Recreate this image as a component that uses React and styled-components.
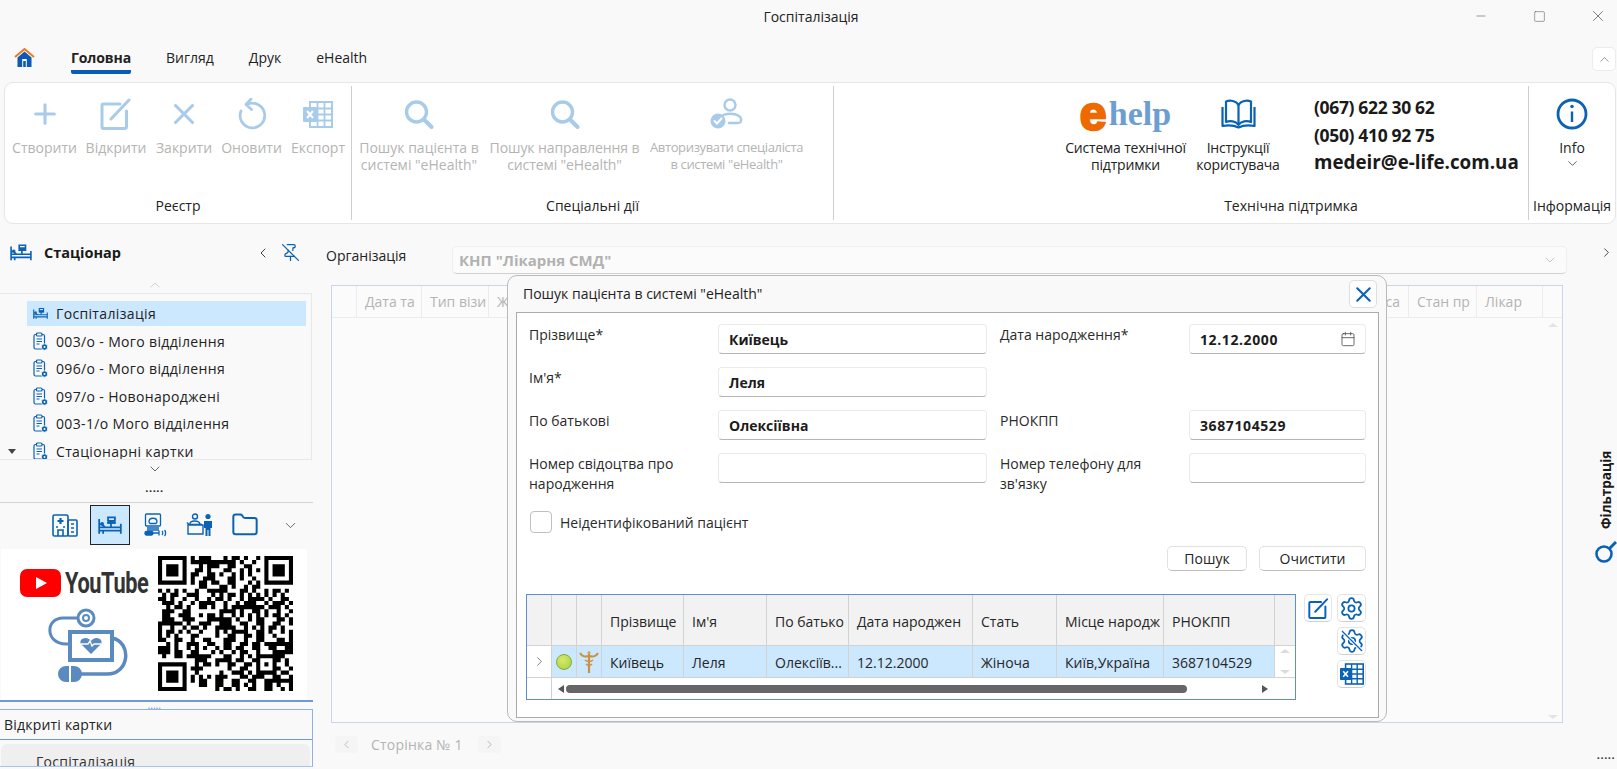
import React from 'react';
import styled, { createGlobalStyle } from 'styled-components';
import { Settings, Folder, ChevronUp, ChevronDown, ChevronLeft, ChevronRight, Minus, Square, X, Plus, PinOff, Calendar } from 'lucide-react';

const BLUE = '#0a62b6';
const PALE = '#a9cbea';
const FONT = '"Open Sans", "Noto Sans", "Liberation Sans", sans-serif';

const Global = createGlobalStyle`
  html, body { margin: 0; padding: 0; background: #f9f9f9; }
  body { font-family: ${FONT}; font-size: 14px; color: #1f1f1f; overflow: hidden; }
  * { box-sizing: border-box; }
`;

const Page = styled.div`position: relative; width: 1617px; height: 769px; display: flex; flex-direction: column; overflow: hidden; background: #f9f9f9;`;

/* Title bar */
const TitleBar = styled.div`height: 32px; flex: none; display: grid; grid-template-columns: 1fr auto 1fr; align-items: center; padding-left: 5px;`;
const TitleText = styled.div`grid-column: 2; font-size: 14px; color: #222;`;
const WinControls = styled.div`grid-column: 3; justify-self: end; display: flex; gap: 28.5px; padding-right: 4px; color: #555;`;
const WinBtn = styled.div`width: 30px; display: flex; justify-content: center; align-items: center;`;

/* Tabs */
const TabBar = styled.div`height: 50px; flex: none; display: flex; align-items: flex-start; padding: 15px 1px 0 14px;`;
const HomeSlot = styled.div`width: 21px; height: 20px; margin: 1px 36px 0 0;`;
const Tabs = styled.div`display: flex; gap: 35px; margin-top: 1px;`;
const Tab = styled.div`
  line-height: 20px; padding-bottom: 2px; font-size: 14px; color: #222;
  font-weight: ${p => (p.$active ? 700 : 400)};
  letter-spacing: ${p => (p.$active ? -0.1 : 0)}px;
  border-bottom: 4px solid ${p => (p.$active ? '#0a5bb5' : 'transparent')};
  border-radius: 2px;
`;
const CollapseBtn = styled.div`margin-left: auto; width: 24px; height: 24px; background: #fff; border: 1px solid #ececec; border-radius: 5px; display: flex; align-items: center; justify-content: center; color: #777;`;

/* Ribbon */
const Ribbon = styled.div`height: 142px; flex: none; margin: 0 1px 0 4px; background: #fff; border: 1px solid #e6e6e6; border-radius: 9px; display: flex; align-items: stretch; padding: 3px 0;`;
const Group = styled.div`
  width: ${p => p.$w}px; flex: none; display: flex; flex-direction: column;
  border-right: ${p => (p.$last ? 'none' : '1px solid #cfcfcf')};
`;
const GroupBody = styled.div`flex: 1; display: flex; justify-content: ${p => p.$end ? 'flex-end' : 'flex-start'}; gap: ${p => p.$gap || 10}px; padding: 0 ${p => p.$pr || 0}px 0 ${p => p.$pl || 0}px;`;
const GroupLabel = styled.div`height: 18px; margin-bottom: 5px; padding-left: ${p => p.$pl || 0}px; line-height: 18px; font-size: 14px; text-align: center; color: #222; white-space: nowrap;`;
const Tool = styled.div`width: ${p => p.$w}px; flex: none; display: flex; flex-direction: column; align-items: center; padding-top: 11px;`;
const ToolIcon = styled.div`height: 34px; display: flex; align-items: center; justify-content: center;`;
const ToolLabel = styled.div`margin-top: 8px; line-height: 17px; font-size: ${p => p.$fs || 14}px; letter-spacing: ${p => p.$ls ?? 0}px; text-align: center; white-space: pre; color: ${p => (p.$on ? '#222' : '#b4b4b4')};`;
const Contact = styled.div`width: 207px; flex: none; margin-left: 26px; padding-top: 8px; font-weight: 700; line-height: 27.5px; color: #1a1a1a; white-space: nowrap;`;
const Phone = styled.div`font-size: 17.5px; letter-spacing: -0.35px;`;
const Email = styled.div`font-size: 18.800px;`;
const LogoBox = styled.div`height: 36px; display: flex; align-items: flex-end; margin-top: -1px;`;
const LogoE = styled.span`font: 700 48px/36px "Liberation Sans", sans-serif; color: #ee6a00; -webkit-text-stroke: 2.5px #ee6a00; width: 29px; height: 36px; display: block; margin-top: -8px;`;
const LogoHelp = styled.span`font: 700 34px/36px "Liberation Serif", serif; color: #6c9ed2; letter-spacing: 0;`;

/* Body */
const Body = styled.div`flex: 1; min-height: 0; display: flex;`;

/* Sidebar */
const Sidebar = styled.div`width: 314px; flex: none; display: flex; flex-direction: column; overflow: hidden;`;
const SideHeader = styled.div`height: 52px; flex: none; display: flex; align-items: center; padding: 5px 14px 0 10px;`;
const SideTitle = styled.div`margin-left: 12px; font-weight: 700; font-size: 14.500px; flex: 1; color: #1a1a1a;`;
const PinSlot = styled.div`margin-left: 10px; color: ${BLUE}; display: flex;`;
const ArrowRow = styled.div`height: ${p => p.$h}px; flex: none; display: flex; justify-content: center; align-items: center; padding-right: 5px; color: ${p => p.$c || '#555'};`;
const TreeBox = styled.div`height: 167px; flex: none; width: 312px; border: 1px solid #e8e8e8; border-left: none; padding: 7px 5px 0 0; overflow: hidden;`;
const TreeLine = styled.div`display: flex; align-items: center; height: 25px; margin-bottom: 2.5px;`;
const ToggleSlot = styled.div`width: 27px; flex: none; padding-left: 8px;`;
const Triangle = styled.div`width: 0; height: 0; border-left: 4.5px solid transparent; border-right: 4.5px solid transparent; border-top: 5px solid #444;`;
const TreeRow = styled.div`flex: 1; height: 25px; display: flex; align-items: center; gap: 8px; padding-left: 6px; font-size: 14px; letter-spacing: 0.35px; color: #222; white-space: nowrap; background: ${p => (p.$sel ? '#cce8ff' : 'transparent')};`;
const Dots = styled.div`height: ${p => p.$h}px; flex: none; display: flex; justify-content: center; align-items: center; padding-right: ${p => p.$pr ?? 0}px; padding-bottom: ${p => p.$pb ?? 0}px; font-size: ${p => p.$fs || 11}px; line-height: 1; font-weight: 700; letter-spacing: ${p => p.$ls ?? 0.6}px; color: ${p => p.$c || '#222'};`;
const IconStrip = styled.div`height: 47px; flex: none; width: 313px; border-top: 1px solid #d4d4d4; display: flex; align-items: center; gap: 5px; padding: 0 0 2px 45px;`;
const StripCell = styled.div`width: 40px; height: 40px; display: flex; align-items: center; justify-content: center; color: ${BLUE}; border: 1px solid ${p => (p.$sel ? '#222' : 'transparent')}; background: ${p => (p.$sel ? '#cce8ff' : 'transparent')};`;
const Banner = styled.div`height: 151px; width: 306px; margin-left: 1px; flex: none; background: #fff; display: flex; padding: 7px 14px 0 0;`;
const BannerLeft = styled.div`flex: 1; display: flex; flex-direction: column; align-items: flex-start; padding: 13px 0 0 19px;`;
const YT = styled.div`display: flex; align-items: center; gap: 4px;`;
const YTText = styled.span`font: 700 29px/28px Roboto, sans-serif; color: #333; display: inline-block; transform: scaleX(0.75); transform-origin: left center; letter-spacing: -0.5px; width: 83px;`;
const MedicalSlot = styled.div`margin: 11px 0 0 28px;`;
const BlueRule = styled.div`height: 2px; width: 313px; flex: none; background: #6f9bd3;`;
const OpenPanel = styled.div`height: 58px; width: 313px; flex: none; border: 1px solid #8fb3e0; border-left: none; border-bottom-color: #a9c4e6; overflow: hidden;`;
const OpenHeader = styled.div`height: 30px; padding-left: 4px; line-height: 29px; font-size: 14px; letter-spacing: 0.2px; border-bottom: 1px solid #6f9bd3; color: #222;`;
const OpenRow = styled.div`height: 30px; margin: 4px 2px 0 1px; border-radius: 6px; background: #efefef; padding: 8px 0 0 35px; font-size: 14px; line-height: 20px; letter-spacing: 0.3px; color: #333;`;

/* Main */
const Main = styled.div`flex: 1; min-width: 0; display: flex; flex-direction: column; padding: 22px 23px 0 12px;`;
const OrgRow = styled.div`height: 28px; flex: none; display: flex; align-items: flex-start;`;
const OrgLabel = styled.div`width: 126px; flex: none; font-size: 14px; line-height: 19px; color: #222;`;
const OrgSelect = styled.div`flex: 1; height: 28px; background: #fbfbfb; border: 1px solid #efefef; border-bottom: 1px solid #cfcfcf; border-radius: 5px; display: flex; align-items: center; justify-content: space-between; padding: 0 8px 0 6px; font-weight: 700; font-size: 15px; color: #b2b2b2;`;
const Grid = styled.div`margin: 11px 4px 0 5px; height: 438px; flex: none; border: 1px solid #c8d8ec; display: flex; flex-direction: column; background: #fbfbfb;`;
const GridHead = styled.div`height: 32px; flex: none; display: flex; border-bottom: 1px solid #ececec; color: #b4b4b4; font-size: 14px;`;
const GridCol = styled.div`
  width: ${p => (p.$w ? p.$w + 'px' : 'auto')}; flex: ${p => (p.$w ? 'none' : 1)};
  border-right: ${p => (p.$last ? 'none' : '1px solid #ececec')};
  padding: 0 ${p => (p.$right ? 8 : 0)}px 0 ${p => (p.$right ? 0 : 8)}px; line-height: 31px; white-space: nowrap; overflow: hidden;
  text-align: ${p => (p.$right ? 'right' : 'left')};
`;
const GridBody = styled.div`flex: 1; display: flex; flex-direction: column; justify-content: space-between; align-items: flex-end; padding: 5px 4px 3px 0;`;
const Tri = styled.div`width: 0; height: 0; border-left: ${p => p.$s}px solid transparent; border-right: ${p => p.$s}px solid transparent; ${p => (p.$down ? 'border-top' : 'border-bottom')}: ${p => p.$s - 1}px solid ${p => p.$c};`;
const Pager = styled.div`margin: 13px 0 0 9px; height: 17px; flex: none; display: flex; align-items: center; font-size: 14px; letter-spacing: 0.2px; color: #b4b4b4;`;
const PagerBtn = styled.div`width: 23px; height: 17px; background: #f5f5f5; border-radius: 4px; display: flex; align-items: center; justify-content: center; color: #999;`;
const PagerText = styled.div`width: 120px; padding-left: 13px; white-space: nowrap;`;

/* Rail */
const Rail = styled.div`width: 27px; flex: none; display: flex; flex-direction: column; align-items: center; padding: 21px 0 9px 5px; color: #333;`;
const RailText = styled.div`writing-mode: vertical-rl; transform: rotate(180deg); margin-top: 189px; font-weight: 700; font-size: 13.500px; line-height: 14px; color: #1a1a1a; height: 80px; white-space: nowrap; text-align: left;`;
const RailIcon = styled.div`margin-top: 12px; display: flex; overflow: hidden;`;
const RailDots = styled.div`margin-top: auto; font-size: 11px; font-weight: 700; line-height: 1; letter-spacing: 0.6px; color: #333;`;

/* Dialog */
const Dialog = styled.div`position: absolute; left: 507px; top: 275px; width: 880px; height: 447px; background: #f9f9f9; border: 1.5px solid #b9b9b9; border-radius: 10px; display: flex; flex-direction: column; padding: 0 7px 3px 8px;`;
const DialogHead = styled.div`height: 36px; flex: none; display: flex; align-items: flex-start; justify-content: space-between; padding: 8px 0 0 7px; font-size: 14px; color: #222;`;
const CloseBtn = styled.div`width: 28px; height: 28px; margin: -4px 2px 0 0; background: #fff; border: 1px solid #dedede; border-radius: 5px; display: flex; align-items: center; justify-content: center; color: ${BLUE};`;
const DialogPanel = styled.div`flex: 1; min-height: 0; background: #fff; border: 1px solid #ababab; padding-top: 11px;`;
const Form = styled.div`display: grid; grid-template-columns: 189px 269px 202px 177px; grid-auto-rows: 30px; row-gap: 13px; padding-left: 12px;`;
const FormLabel = styled.div`padding: 1px 0 0 ${p => (p.$second ? 13 : 0)}px; font-size: 14px; line-height: 20px; color: #2a2a2a; ${p => p.$tall ? 'height: 41px;' : ''}`;
const Field = styled.div`height: 30px; display: flex; align-items: center; justify-content: space-between; padding: 0 9px 0 10px; background: #fff; border: 1px solid #ebebeb; border-bottom: 1px solid #b5b5b5; border-radius: 4px; font-weight: 700; font-size: 14px; letter-spacing: ${p => (p.$num ? 0.6 : 0)}px; color: #1c1c1c;`;
const CheckRow = styled.label`display: flex; align-items: center; gap: 8px; height: 22px; margin: 28px 0 0 13px; font-size: 14px; color: #2a2a2a;`;
const CheckBox = styled.span`width: 22px; height: 22px; border: 1px solid #c0c0c0; border-radius: 4px; background: #fff;`;
const FormActions = styled.div`display: flex; justify-content: flex-end; gap: 12px; margin-top: 13px; padding-right: 12px;`;
const PlainBtn = styled.div`width: ${p => p.$w}px; height: 25px; border: 1px solid #e2e2e2; border-bottom: 1px solid #bdbdbd; border-radius: 5px; background: #fff; font-size: 14px; text-align: center; line-height: 24px; color: #222;`;
const ResultRow = styled.div`display: flex; align-items: flex-start; gap: 8px; margin-top: 23px; padding-left: 9px;`;
const Table = styled.div`width: 770px; height: 106px; flex: none; border: 1px solid #5b8fd0; display: flex; flex-direction: column;`;
const THead = styled.div`height: 51px; flex: none; display: flex; background: #f2f2f2; border-bottom: 1px solid #d2d2d2;`;
const TRow = styled.div`height: 32px; flex: none; display: flex; border-bottom: 1px solid #d2d2d2;`;
const Cell = styled.div`
  width: ${p => p.$w}px; flex: none; display: flex; align-items: center; justify-content: ${p => p.$center ? 'center' : 'flex-start'};
  padding-left: ${p => (p.$center ? 0 : 8)}px; padding-top: ${p => (p.$center ? 0 : 2)}px; overflow: hidden; white-space: nowrap; font-size: 14px; color: #262626;
  border-right: 1px solid ${p => (p.$noline ? 'transparent' : '#d2d2d2')};
  background: ${p => (p.$sel ? '#cce8ff' : 'transparent')};
`;
const VScroll = styled.div`flex: 1; display: flex; flex-direction: column; align-items: center; justify-content: space-between; padding: 3px 0; background: #fff;`;
const HScroll = styled.div`flex: 1; display: flex; align-items: center;`;
const HCorner = styled.div`width: 25px; height: 100%; flex: none; border-right: 1px solid #d2d2d2; margin-right: 6px;`;
const HTri = styled.div`width: 0; height: 0; border-top: 4.5px solid transparent; border-bottom: 4.5px solid transparent; ${p => (p.$right ? 'border-left' : 'border-right')}: 6px solid #555;`;
const Thumb = styled.div`width: 621px; height: 8px; background: #666; border-radius: 4px; margin: 0 75px 0 2px;`;
const Green = styled.div`width: 16px; height: 16px; border-radius: 50%; border: 1px solid #8aa83c; background: radial-gradient(circle at 40% 35%, #d4ea6a, #a9cf3e);`;
const SideBtns = styled.div`display: grid; grid-template-columns: 28px 29px; grid-auto-rows: 28px; column-gap: 5px; row-gap: 5px;`;
const SideBtn = styled.div`grid-column: ${p => p.$col}; height: 28px; background: #fff; border: 1px solid #e4e4e4; border-bottom-color: #cfcfcf; border-radius: 5px; display: flex; align-items: center; justify-content: center; color: ${BLUE};`;
const GearWrap = styled.div`position: relative; width: 26px; height: 26px; color: ${BLUE};`;
const Slash = styled.svg`position: absolute; left: 0; top: 0;`;

/* Drawings */
const Home = () => (
  <svg width="21" height="20" viewBox="0 0 21 20">
    <path d="M1 9 10.5 1 20 9" fill="none" stroke="#ee7a1f" strokeWidth="2" />
    <path d="M3.5 9.5 10.5 3.5 17.5 9.5V19H3.5Z" fill="#0a5bb5" />
    <rect x="8.2" y="11" width="4.6" height="8" fill="#fff" />
    <rect x="9.2" y="13" width="2.6" height="6" fill="#0a5bb5" />
  </svg>
);
const Mag = ({ c = PALE }) => (
  <svg width="30" height="29" viewBox="0 0 30 29" fill="none" stroke={c} strokeLinecap="round">
    <circle cx="12.5" cy="12" r="10" strokeWidth="3.4" />
    <line x1="20" y1="19.5" x2="27.5" y2="27" strokeWidth="4" />
  </svg>
);
const Undo = () => (
  <svg width="28" height="33" viewBox="0 0 28 33" fill="none" stroke={PALE} strokeWidth="2.8" strokeLinecap="round" strokeLinejoin="round">
    <path d="M9 6.5a12.3 12.3 0 1 1-6 6.5" />
    <path d="M13 1 8 6.5l5.5 5" />
  </svg>
);
const PenBig = ({ c = PALE, s = 32, sw = 3 }) => (
  <svg width={s} height={s} viewBox="0 0 32 32" fill="none" stroke={c} strokeWidth={sw} strokeLinecap="round" strokeLinejoin="round">
    <path d="M20 6H3.5a1.5 1.5 0 0 0-1.5 1.5v21.500a1.500 1.500 0 0 0 1.500 1.500H25a1.500 1.500 0 0 0 1.500-1.500V13" />
    <path d="M11 21 29 2" />
  </svg>
);
const Excel = ({ c = PALE, w = 30, h = 27 }) => (
  <svg width={w} height={h} viewBox="0 0 30 27" fill="none">
    <rect x="7" y="1" width="22" height="25" stroke={c} strokeWidth="2" fill="#fff" />
    <path d="M14.500 1v25M21.500 1v25M7 7.500h22M7 13.500h22M7 19.500h22" stroke={c} strokeWidth="1.800" />
    <rect x="0" y="6" width="14" height="15" rx="1" fill={c} />
    <path d="M4 10l6 7M10 10l-6 7" stroke="#fff" strokeWidth="2" />
  </svg>
);
const AuthUser = () => (
  <svg width="34" height="32" viewBox="0 0 34 32" fill="none" stroke={PALE} strokeWidth="2.400" strokeLinecap="round">
    <circle cx="20" cy="7" r="5.500" />
    <path d="M12 18c3-3 13-3 17 0 3 2 3 7-1 7H19" />
    <circle cx="8" cy="23" r="7.500" fill={PALE} stroke="none" />
    <path d="M4.500 23l2.500 2.500 4.500-5" stroke="#fff" strokeWidth="2" />
  </svg>
);
const Book = () => (
  <svg width="35" height="30" viewBox="0 0 35 30" fill="none" stroke={BLUE} strokeWidth="2.200" strokeLinejoin="round">
    <path d="M17.500 6C15 1.500 9 1 5 2.500V23c4-1.500 10-1 12.500 3 2.500-4 8.500-4.500 12.500-3V2.500C26 1 20 1.500 17.500 6Z" />
    <path d="M17.500 6v20" />
    <path d="M1.500 8v19c5-1 11-1 16 1.500C22.500 26 28.500 26 33.500 27V8" />
  </svg>
);
const Info = () => (
  <svg width="32" height="32" viewBox="0 0 32 32" fill="none" stroke={BLUE}>
    <circle cx="16" cy="16" r="14" strokeWidth="2.800" />
    <path d="M16 13.500V24" strokeWidth="2.400" />
    <circle cx="16" cy="8.500" r="1.700" fill={BLUE} stroke="none" />
  </svg>
);
const Bed = ({ s = 22 }) => (
  <svg width={s} height={s * 0.82} viewBox="0 0 24 20" fill="none" stroke={BLUE} strokeWidth="1.800">
    <path d="M1 4v15M1 9.500h3l3 3M1 12.500h22v3.500H1M23 9v10M5 16v3" />
    <circle cx="4" cy="9" r="1" fill={BLUE} />
    <path d="M13 12.500V8M10 2.500h7v3.500h-7zM9 8h9" />
    <path d="M11 6h5v2h-5z" fill={BLUE} />
  </svg>
);
const Clip = () => (
  <svg width="15" height="19" viewBox="0 0 15 19" fill="none" stroke={BLUE} strokeWidth="1.200">
    <rect x="1" y="2.500" width="10.500" height="14.500" rx="1.500" />
    <rect x="3.500" y="1" width="5.500" height="3" rx="1" fill="#fff" />
    <path d="M3.500 7h5.500M3.500 9.500h5.500M3.500 12h3" />
    <circle cx="11.500" cy="15" r="3.200" fill={BLUE} stroke="#fff" strokeWidth="0.800" />
    <circle cx="11.500" cy="15" r="1" fill="#fff" stroke="none" />
  </svg>
);
const Hospital = () => (
  <svg width="26" height="23" viewBox="0 0 26 23" fill="none" stroke={BLUE} strokeWidth="1.600">
    <rect x="1" y="1" width="15" height="21" rx="1.500" />
    <rect x="16" y="6" width="9" height="16" rx="1" />
    <path d="M8.500 4v6M5.500 7h6" strokeWidth="2.200" />
    <path d="M6 22v-6h5v6M4 13h2M11 13h2M19 10h3M19 14h3M19 18h3" />
  </svg>
);
const Monitor = () => (
  <svg width="23" height="24" viewBox="0 0 23 24" fill="none" stroke={BLUE} strokeWidth="1.300">
    <rect x="1.500" y="1" width="15" height="12" rx="1" />
    <path d="M5 9c0-5 8-5 8 0l-1 1.500H6zM3 15h12M3 17h12" />
    <rect x="1" y="18.500" width="8" height="3.500" rx="1.500" fill={BLUE} />
    <path d="M9 20h6M15 17.500v5M18 18c1 1 1 3 0 4M20.500 17c1.500 1.500 1.500 4.500 0 6" />
  </svg>
);
const Reception = () => (
  <svg width="28" height="24" viewBox="0 0 28 24" fill="none" stroke={BLUE} strokeWidth="1.400">
    <circle cx="9" cy="3.500" r="2.500" />
    <path d="M4 11c0-4 9-4 10 0M1 9.500l2 2h13M2 12h15v9H2z" />
    <circle cx="22" cy="3.500" r="2.600" fill={BLUE} stroke="none" />
    <path d="M18 8h8v7h-1.500v8h-2v-6h-1v6h-2v-8H18z" fill={BLUE} stroke="none" />
  </svg>
);
const Medical = () => (
  <svg width="80" height="75" viewBox="0 0 80 75" fill="none" stroke="#5b8ac0">
    <circle cx="38" cy="10" r="8" strokeWidth="3" />
    <circle cx="38" cy="10" r="3" strokeWidth="2" />
    <path d="M29 10H15C-3 10-3 36 18 36h4" strokeWidth="3" />
    <rect x="22" y="24" width="42" height="28" strokeWidth="4" />
    <path d="M43 46 33 36c-3-5 6-9 10-3 4-6 13-2 10 3z" fill="#5b8ac0" stroke="none" />
    <path d="M33 36h7l2-3 2 5 2-2h7" stroke="#fff" strokeWidth="1.300" />
    <path d="M64 30c20 4 18 36-5 36H32" strokeWidth="3.500" />
    <path d="M21 58h-3a8 8 0 0 0 0 16h3z M23 58h3a8 8 0 0 1 0 16h-3z" fill="#5b8ac0" stroke="none" />
  </svg>
);
const Caduceus = () => (
  <svg width="20" height="24" viewBox="0 0 20 24" fill="none" stroke="#c9923c" strokeWidth="1.600">
    <path d="M10 3v20" strokeWidth="2.200" />
    <circle cx="10" cy="2.500" r="1.500" fill="#d9a850" stroke="none" />
    <path d="M1 3c2 4 6 4 8 3M19 3c-2 4-6 4-8 3" strokeWidth="2" />
    <path d="M6 10c2 2 6 2 8 0M7 14c2 2 4 2 6 0" />
  </svg>
);
const qrPath = (() => {
  const N = 33;
  let seed = 20481;
  const rnd = () => { seed = (seed * 1103515245 + 12345) & 0x7fffffff; return (seed >> 12) & 1; };
  const g = Array.from({ length: N }, () => Array.from({ length: N }, rnd));
  const finder = (ox, oy) => {
    for (let y = -1; y <= 7; y++) for (let x = -1; x <= 7; x++) {
      const X = ox + x, Y = oy + y;
      if (X < 0 || Y < 0 || X >= N || Y >= N) continue;
      const inside = x >= 0 && x <= 6 && y >= 0 && y <= 6;
      const ring = x === 0 || x === 6 || y === 0 || y === 6;
      const core = x >= 2 && x <= 4 && y >= 2 && y <= 4;
      g[Y][X] = inside && (ring || core) ? 1 : 0;
    }
  };
  finder(0, 0); finder(N - 7, 0); finder(0, N - 7);
  for (let y = 24; y <= 28; y++) for (let x = 24; x <= 28; x++) {
    const ring = x === 24 || x === 28 || y === 24 || y === 28;
    g[y][x] = ring || (x === 26 && y === 26) ? 1 : 0;
  }
  let d = '';
  g.forEach((row, y) => row.forEach((v, x) => { if (v) d += `M${x} ${y}h1v1h-1z`; }));
  return d;
})();

const headCols = [['Прізвище', 82], ["Ім'я", 83], ['По батько', 82], ['Дата народжен', 124], ['Стать', 84], ['Місце народж', 107], ['РНОКПП', 111]];
const rowCols = [['Київець', 82], ['Леля', 83], ['Олексіїв...', 82], ['12.12.2000', 124], ['Жіноча', 84], ['Київ,Україна', 107], ['3687104529', 111]];
const tree = ['003/о - Мого відділення', '096/о - Мого відділення', '097/о - Новонароджені', '003-1/о Мого відділення'];

export default function App() {
  return (
    <Page>
      <Global />
      <TitleBar>
        <TitleText>Госпіталізація</TitleText>
        <WinControls>
          <WinBtn><Minus size={14} strokeWidth={1} /></WinBtn>
          <WinBtn><Square size={13} strokeWidth={1} /></WinBtn>
          <WinBtn><X size={18} strokeWidth={1} /></WinBtn>
        </WinControls>
      </TitleBar>

      <TabBar>
        <HomeSlot><Home /></HomeSlot>
        <Tabs>
          <Tab $active>Головна</Tab>
          <Tab>Вигляд</Tab>
          <Tab>Друк</Tab>
          <Tab>eHealth</Tab>
        </Tabs>
        <CollapseBtn><ChevronUp size={15} strokeWidth={1.2} /></CollapseBtn>
      </TabBar>

      <Ribbon>
        <Group $w={347}>
          <GroupBody $pl={8}>
            <Tool $w={63}><ToolIcon><Plus size={32} strokeWidth={2.300} color={PALE} /></ToolIcon><ToolLabel>Створити</ToolLabel></Tool>
            <Tool $w={60}><ToolIcon><PenBig /></ToolIcon><ToolLabel>Відкрити</ToolLabel></Tool>
            <Tool $w={56}><ToolIcon><X size={34} strokeWidth={2.200} color={PALE} /></ToolIcon><ToolLabel>Закрити</ToolLabel></Tool>
            <Tool $w={59}><ToolIcon><Undo /></ToolIcon><ToolLabel>Оновити</ToolLabel></Tool>
            <Tool $w={54}><ToolIcon><Excel /></ToolIcon><ToolLabel>Експорт</ToolLabel></Tool>
          </GroupBody>
          <GroupLabel>Реєстр</GroupLabel>
        </Group>
        <Group $w={482}>
          <GroupBody $pl={7} $gap={10}>
            <Tool $w={120}><ToolIcon><Mag /></ToolIcon><ToolLabel>{'Пошук пацієнта в\nсистемі "eHealth"'}</ToolLabel></Tool>
            <Tool $w={151}><ToolIcon><Mag /></ToolIcon><ToolLabel $ls={-0.1}>{'Пошук направлення в\nсистемі "eHealth"'}</ToolLabel></Tool>
            <Tool $w={153}><ToolIcon><AuthUser /></ToolIcon><ToolLabel $fs={13} $ls={-0.35}>{'Авторизувати спеціаліста\nв системі "eHealth"'}</ToolLabel></Tool>
          </GroupBody>
          <GroupLabel>Спеціальні дії</GroupLabel>
        </Group>
        <Group $w={695}>
          <GroupBody $end $gap={7} $pr={7}>
            <Tool $w={125}>
              <ToolIcon>
                <LogoBox><LogoE>e</LogoE><LogoHelp>help</LogoHelp></LogoBox>
              </ToolIcon>
              <ToolLabel $on $ls={-0.2}>{'Система технічної\nпідтримки'}</ToolLabel>
            </Tool>
            <Tool $w={86}>
              <ToolIcon><Book /></ToolIcon>
              <ToolLabel $on $ls={-0.2}>{'Інструкції\nкористувача'}</ToolLabel>
            </Tool>
            <Contact>
              <Phone>(067) 622 30 62</Phone>
              <Phone>(050) 410 92 75</Phone>
              <Email>medeir@e-life.com.ua</Email>
            </Contact>
          </GroupBody>
          <GroupLabel $pl={220}>Технічна підтримка</GroupLabel>
        </Group>
        <Group $w={86} $last>
          <GroupBody>
            <Tool $w={86}>
              <ToolIcon><Info /></ToolIcon>
              <ToolLabel $on>Info</ToolLabel>
              <ChevronDown size={15} strokeWidth={1.200} color="#333" />
            </Tool>
          </GroupBody>
          <GroupLabel>Інформація</GroupLabel>
        </Group>
      </Ribbon>

      <Body>
        <Sidebar>
          <SideHeader>
            <Bed />
            <SideTitle>Стаціонар</SideTitle>
            <ChevronLeft size={16} strokeWidth={1.400} color="#333" />
            <PinSlot><PinOff size={19} strokeWidth={1.600} /></PinSlot>
          </SideHeader>
          <ArrowRow $h={17} $c="#bbb"><ChevronUp size={16} strokeWidth={1} /></ArrowRow>
          <TreeBox>
            <TreeLine>
              <ToggleSlot />
              <TreeRow $sel><Bed s={15} />Госпіталізація</TreeRow>
            </TreeLine>
            {tree.map(t => (
              <TreeLine key={t}>
                <ToggleSlot />
                <TreeRow><Clip />{t}</TreeRow>
              </TreeLine>
            ))}
            <TreeLine>
              <ToggleSlot><Triangle /></ToggleSlot>
              <TreeRow><Clip />Стаціонарні картки</TreeRow>
            </TreeLine>
          </TreeBox>
          <ArrowRow $h={18} $c="#444"><ChevronDown size={16} strokeWidth={1.200} /></ArrowRow>
          <Dots $h={24} $pr={5} $pb={5} $c="#222">.....</Dots>
          <IconStrip>
            <StripCell><Hospital /></StripCell>
            <StripCell $sel><Bed s={24} /></StripCell>
            <StripCell><Monitor /></StripCell>
            <StripCell><Reception /></StripCell>
            <StripCell><Folder size={28} strokeWidth={1.700} /></StripCell>
            <StripCell><ChevronDown size={17} strokeWidth={1.100} color="#444" /></StripCell>
          </IconStrip>
          <Banner>
            <BannerLeft>
              <YT>
                <svg width="41" height="28" viewBox="0 0 41 28">
                  <rect width="41" height="28" rx="7" fill="#f00" />
                  <path d="M16 8l11 6-11 6z" fill="#fff" />
                </svg>
                <YTText>YouTube</YTText>
              </YT>
              <MedicalSlot><Medical /></MedicalSlot>
            </BannerLeft>
            <svg width="135" height="135" viewBox="0 0 33 33"><path d={qrPath} fill="#000" /></svg>
          </Banner>
          <BlueRule />
          <Dots $h={7} $fs={8} $pr={5} $ls={0.4} $c="#6f9bd3">.....</Dots>
          <OpenPanel>
            <OpenHeader>Відкриті картки</OpenHeader>
            <OpenRow>Госпіталізація</OpenRow>
          </OpenPanel>
        </Sidebar>

        <Main>
          <OrgRow>
            <OrgLabel>Організація</OrgLabel>
            <OrgSelect>
              КНП "Лікарня СМД"
              <ChevronDown size={16} strokeWidth={1} color="#aaa" />
            </OrgSelect>
          </OrgRow>
          <Grid>
            <GridHead>
              <GridCol $w={25} />
              <GridCol $w={65}>Дата та</GridCol>
              <GridCol $w={67}>Тип візи</GridCol>
              <GridCol $w={80}>Ж</GridCol>
              <GridCol />
              <GridCol $w={80} $right>Адреса</GridCol>
              <GridCol $w={68}>Стан пр</GridCol>
              <GridCol $w={66}>Лікар</GridCol>
              <GridCol $w={19} $last />
            </GridHead>
            <GridBody>
              <Tri $s={5} $c="#e4e4e4" />
              <Tri $s={5} $c="#e4e4e4" $down />
            </GridBody>
          </Grid>
          <Pager>
            <PagerBtn><ChevronLeft size={13} strokeWidth={1.200} /></PagerBtn>
            <PagerText>Сторінка № 1</PagerText>
            <PagerBtn><ChevronRight size={13} strokeWidth={1.200} /></PagerBtn>
          </Pager>
        </Main>

        <Rail>
          <ChevronRight size={15} strokeWidth={1.400} />
          <RailText>Фільтрація</RailText>
          <RailIcon>
            <svg width="22" height="22" viewBox="0 0 22 22" fill="none" stroke={BLUE}>
              <circle cx="9" cy="13" r="7.500" strokeWidth="2.600" />
              <line x1="14.500" y1="7.500" x2="21" y2="1" strokeWidth="3" />
            </svg>
          </RailIcon>
          <RailDots>.....</RailDots>
        </Rail>
      </Body>

      <Dialog>
        <DialogHead>
          Пошук пацієнта в системі "eHealth"
          <CloseBtn><X size={25} strokeWidth={2} /></CloseBtn>
        </DialogHead>
        <DialogPanel>
          <Form>
            <FormLabel>Прізвище*</FormLabel>
            <Field>Київець</Field>
            <FormLabel $second>Дата народження*</FormLabel>
            <Field $num>12.12.2000<Calendar size={16} strokeWidth={1.300} color="#555" /></Field>

            <FormLabel>Ім'я*</FormLabel>
            <Field>Леля</Field>
            <div />
            <div />

            <FormLabel>По батькові</FormLabel>
            <Field>Олексіївна</Field>
            <FormLabel $second>РНОКПП</FormLabel>
            <Field $num>3687104529</Field>

            <FormLabel $tall>Номер свідоцтва про<br />народження</FormLabel>
            <Field />
            <FormLabel $second $tall>Номер телефону для<br />зв'язку</FormLabel>
            <Field />
          </Form>
          <CheckRow><CheckBox />Неідентифікований пацієнт</CheckRow>
          <FormActions>
            <PlainBtn $w={80}>Пошук</PlainBtn>
            <PlainBtn $w={107}>Очистити</PlainBtn>
          </FormActions>
          <ResultRow>
            <Table>
              <THead>
                <Cell $w={25} $center /><Cell $w={25} $center /><Cell $w={25} $center />
                {headCols.map(([t, w]) => <Cell key={t} $w={w}>{t}</Cell>)}
                <Cell $w={20} $noline />
              </THead>
              <TRow>
                <Cell $w={25} $center><ChevronRight size={15} strokeWidth={1.100} color="#444" /></Cell>
                <Cell $w={25} $center $sel><Green /></Cell>
                <Cell $w={25} $center $sel><Caduceus /></Cell>
                {rowCols.map(([t, w]) => <Cell key={t} $w={w} $sel>{t}</Cell>)}
                <VScroll>
                  <Tri $s={5} $c="#dcdcdc" />
                  <Tri $s={5} $c="#dcdcdc" $down />
                </VScroll>
              </TRow>
              <HScroll>
                <HCorner />
                <HTri />
                <Thumb />
                <HTri $right />
              </HScroll>
            </Table>
            <SideBtns>
              <SideBtn $col={1}><PenBig c={BLUE} s={21} sw={3} /></SideBtn>
              <SideBtn $col={2}><Settings size={25} strokeWidth={1.700} /></SideBtn>
              <SideBtn $col={2}>
                <GearWrap>
                  <Settings size={26} strokeWidth={1.600} />
                  <Slash width="26" height="26" viewBox="0 0 26 26"><path d="M3 3 23 23" stroke="#fff" strokeWidth="3.500" /><path d="M3 3 23 23" stroke={BLUE} strokeWidth="1.300" /></Slash>
                </GearWrap>
              </SideBtn>
              <SideBtn $col={2}><Excel c={BLUE} w={24} h={22} /></SideBtn>
            </SideBtns>
          </ResultRow>
        </DialogPanel>
      </Dialog>
    </Page>
  );
}
